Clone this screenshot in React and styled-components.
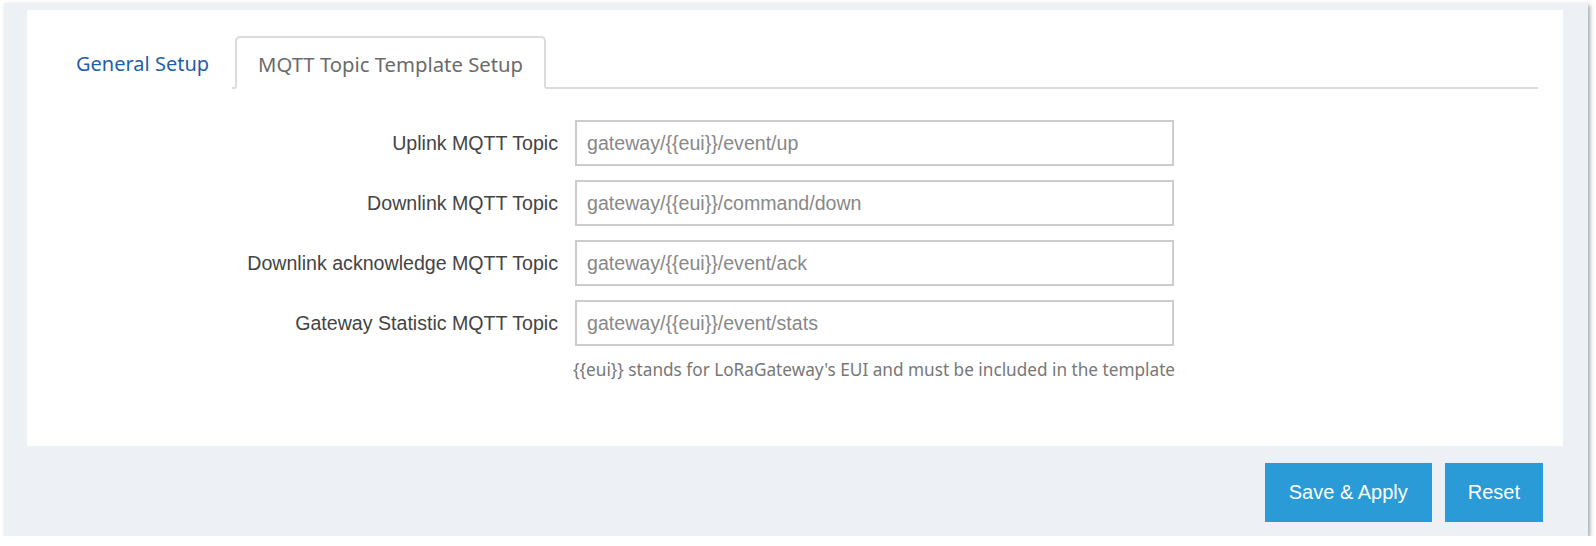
import styled, { createGlobalStyle } from "styled-components";

const GlobalStyle = createGlobalStyle`
  body {
    margin: 0;
    background: #ffffff;
    font-family: "Liberation Sans", Arial, sans-serif;
  }
`;

const Frame = styled.div`
  margin: 3px 0 0 4px;
  width: 1584px;
  height: 533px;
  box-sizing: border-box;
  padding: 7px 25px 0 23px;
  background: #edf0f5;
  box-shadow: 2px 2px 4px rgba(0, 0, 0, 0.35);
  display: flex;
  flex-direction: column;
`;

const Panel = styled.div`
  background: #ffffff;
  height: 436px;
  box-sizing: border-box;
  padding: 26px 25px 0 26px;
`;

const TabBar = styled.ul`
  list-style: none;
  margin: 0;
  padding: 0;
  display: flex;
  border-bottom: 2px solid #dcdcdc;
`;

const Tab = styled.li`
  font-family: "Noto Sans", "Open Sans", sans-serif;
  font-size: ${(p) => (p.active ? "20.3px" : "20px")};
  height: 53px;
  box-sizing: border-box;
  padding: 0 ${(p) => (p.active ? "21px" : "21px")};
  padding-top: 2px;
  display: flex;
  align-items: center;
  margin-bottom: -2px;
  margin-right: ${(p) => (p.active ? "0" : "3px")};
  color: ${(p) => (p.active ? "#6b6b6b" : "#1f5fa8")};
  background: #ffffff;
  border: 2px solid ${(p) => (p.active ? "#dcdcdc" : "transparent")};
  border-bottom-color: ${(p) => (p.active ? "#ffffff" : "transparent")};
  border-radius: 5px 5px 0 0;
`;

const Form = styled.div`
  margin-top: 31px;
  display: flex;
  flex-direction: column;
  gap: 14px;
`;

const Row = styled.div`
  display: flex;
  align-items: center;
`;

const Label = styled.label`
  width: 522px;
  text-align: right;
  padding-right: 17px;
  box-sizing: border-box;
  font-size: 19.6px;
  color: #444444;
  flex-shrink: 0;
`;

const Input = styled.input`
  width: 599px;
  height: 46px;
  box-sizing: border-box;
  border: 2px solid #cccccc;
  padding: 0 10px;
  font-family: "Liberation Sans", Arial, sans-serif;
  font-size: 19.6px;
  color: #888888;
  outline: none;
`;

const Help = styled.div`
  margin: 12px 0 0 520px;
  font-family: "Noto Sans", "Open Sans", sans-serif;
  font-size: 17.2px;
  line-height: 24px;
  color: #777777;
`;

const Actions = styled.div`
  display: flex;
  justify-content: flex-end;
  gap: 13px;
  padding: 17px 20px 0 0;
`;

const Button = styled.button`
  height: 59px;
  padding: 0 ${(p) => (p.wide ? "24px" : "23px")};
  border: none;
  background: #2a9bd6;
  color: #ffffff;
  font-family: "Liberation Sans", Arial, sans-serif;
  font-size: 20px;
  cursor: pointer;
`;

const topics = [
  ["Uplink MQTT Topic", "gateway/{{eui}}/event/up"],
  ["Downlink MQTT Topic", "gateway/{{eui}}/command/down"],
  ["Downlink acknowledge MQTT Topic", "gateway/{{eui}}/event/ack"],
  ["Gateway Statistic MQTT Topic", "gateway/{{eui}}/event/stats"],
];

const App = () => {
  return (
    <>
      <GlobalStyle />
      <Frame>
        <Panel>
          <TabBar>
            <Tab>General Setup</Tab>
            <Tab active>MQTT Topic Template Setup</Tab>
          </TabBar>
          <Form>
            {topics.map(([label, value]) => (
              <Row key={label}>
                <Label>{label}</Label>
                <Input defaultValue={value} />
              </Row>
            ))}
          </Form>
          <Help>
            {"{{eui}} stands for LoRaGateway's EUI and must be included in the template"}
          </Help>
        </Panel>
        <Actions>
          <Button wide>Save &amp; Apply</Button>
          <Button>Reset</Button>
        </Actions>
      </Frame>
    </>
  );
};

export default App;
